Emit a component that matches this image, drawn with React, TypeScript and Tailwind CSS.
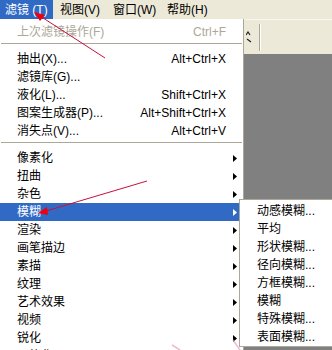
const font = { fontFamily: '"Liberation Sans", "Noto Sans CJK SC", sans-serif' };

type Item =
  | { sep: true }
  | { label: string; shortcut?: string; sub?: boolean; disabled?: boolean; active?: boolean };

const mainItems: Item[] = [
  { label: "上次滤镜操作(F)", shortcut: "Ctrl+F", disabled: true },
  { sep: true },
  { label: "抽出(X)...", shortcut: "Alt+Ctrl+X" },
  { label: "滤镜库(G)..." },
  { label: "液化(L)...", shortcut: "Shift+Ctrl+X" },
  { label: "图案生成器(P)...", shortcut: "Alt+Shift+Ctrl+X" },
  { label: "消失点(V)...", shortcut: "Alt+Ctrl+V" },
  { sep: true },
  { label: "像素化", sub: true },
  { label: "扭曲", sub: true },
  { label: "杂色", sub: true },
  { label: "模糊", sub: true, active: true },
  { label: "渲染", sub: true },
  { label: "画笔描边", sub: true },
  { label: "素描", sub: true },
  { label: "纹理", sub: true },
  { label: "艺术效果", sub: true },
  { label: "视频", sub: true },
  { label: "锐化", sub: true },
  { label: "风格化", sub: true },
];

const blurItems = ["动感模糊...", "平均", "形状模糊...", "径向模糊...", "方框模糊...", "模糊", "特殊模糊...", "表面模糊..."];

function Arrow({ white }: { white?: boolean }) {
  return (
    <svg width="4" height="7" viewBox="0 0 4 7" className="absolute right-[2px] top-[6px]">
      <path d="M0 0 L4 3.5 L0 7 Z" fill={white ? "#ffffff" : "#000000"} />
    </svg>
  );
}

export default function App() {
  return (
    <div className="relative w-[332px] h-[350px] overflow-hidden bg-[#808080] text-[12px] leading-none" style={font}>
      {/* menu bar */}
      <div className="flex h-[19px] bg-[#ece9d8] items-center">
        <div className="h-full w-[53px] bg-[#316ac5] text-white flex items-center pl-[5px]">滤镜 (T)</div>
        <div className="w-[53px] pl-[7px]">视图(V)</div>
        <div className="w-[54px] pl-[7px]">窗口(W)</div>
        <div className="pl-[7px]">帮助(H)</div>
      </div>
      {/* toolbar strip */}
      <div className="h-[35px] bg-[#ece9d8] border-t border-[#f7f6ef] flex items-center pl-[246px] gap-[7px]">
        <svg width="6" height="12" viewBox="0 0 6 12">
          <path d="M0 4 L2 1 L4 4" stroke="#222" strokeWidth="1.2" fill="none" />
          <path d="M1 8 L5 11" stroke="#222" strokeWidth="1.2" />
        </svg>
        <div className="flex h-[27px]">
          <div className="w-px bg-[#aca899]" />
          <div className="w-px bg-white" />
        </div>
      </div>

      {/* main dropdown */}
      <div className="absolute left-0 top-[19px] w-[244px] bg-white border-r border-[#aca899] pt-[4px] text-black">
        {mainItems.map((it, i) =>
          "sep" in it ? (
            <div key={i} className="h-[9px] pt-[2px] px-[1px]">
              <div className="h-px bg-[#aca899]" />
            </div>
          ) : (
            <div
              key={i}
              className={`relative h-[18px] flex items-center pl-[17px] pr-[13px] mr-[4px] ${
                it.active ? "bg-[#316ac5] text-white" : ""
              } ${it.disabled ? "text-[#aca899]" : ""}`}
            >
              <span className="flex-1">{it.label}</span>
              {it.shortcut && <span>{it.shortcut}</span>}
              {it.sub && <Arrow white={it.active} />}
            </div>
          )
        )}
      </div>

      {/* blur submenu */}
      <div className="absolute left-[239px] top-[199px] w-[120px] bg-white border border-[#aca899] pt-[2px] text-black">
        {blurItems.map((t) => (
          <div key={t} className="h-[18px] flex items-center pl-[17px]">
            {t}
          </div>
        ))}
      </div>

      {/* annotation arrows */}
      <svg className="absolute left-0 top-0 pointer-events-none" width="332" height="350">
        <line x1="105" y1="58" x2="40" y2="16" stroke="#c8103a" strokeWidth="1" />
        <path d="M34 12 L45 15 L40 21 Z" fill="#ee0010" />
        <line x1="147" y1="181" x2="46" y2="211" stroke="#c8103a" strokeWidth="1" />
        <path d="M38 213 L47 207 L48 215 Z" fill="#ee0010" />
        <line x1="233" y1="340" x2="240" y2="350" stroke="#e8a0c0" strokeWidth="1.5" opacity="0.7" />
        <line x1="172" y1="345" x2="180" y2="350" stroke="#e8a0c0" strokeWidth="1.5" opacity="0.7" />
      </svg>
    </div>
  );
}
